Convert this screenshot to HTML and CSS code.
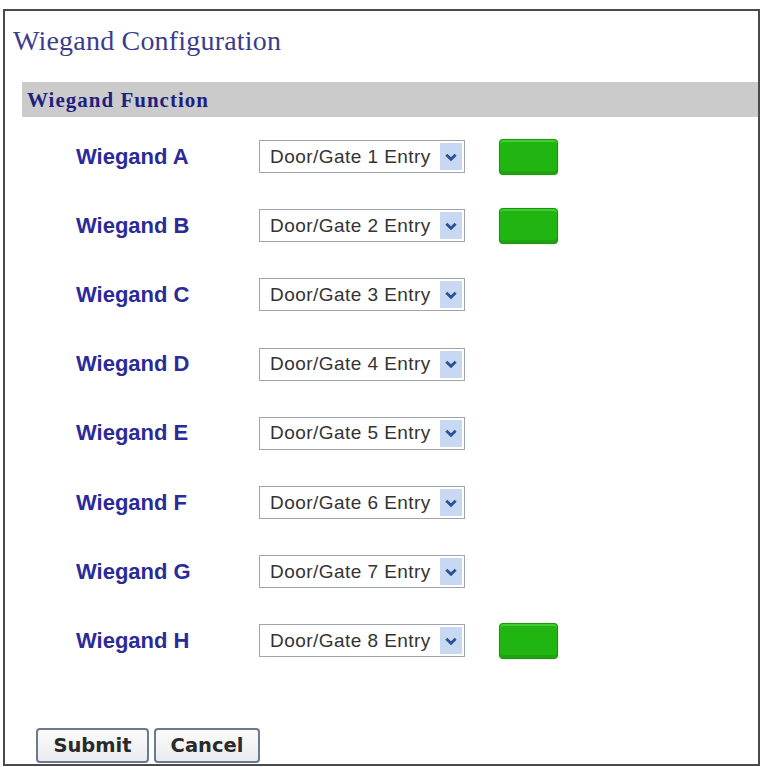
FILE: index.html
```html
<!DOCTYPE html>
<html>
<head>
    <link rel="stylesheet" href="styles.css">
</head>
<body>
    <div class="panel">
        <h1 class="title">Wiegand Configuration</h1>

        <div class="section-bar">Wiegand Function</div>

        <div class="rows">
            <div class="row">
                <span class="row-label">Wiegand A</span>
                <div class="select"><span class="select-text">Door/Gate 1 Entry</span><span class="select-arrow"><svg width="12" height="8" viewBox="0 0 12 8"><path d="M2 2 L6 6 L10 2" fill="none" stroke="#2f4f93" stroke-width="2.4"/></svg></span></div>
                <span class="status-led"></span>
            </div>
            <div class="row">
                <span class="row-label">Wiegand B</span>
                <div class="select"><span class="select-text">Door/Gate 2 Entry</span><span class="select-arrow"><svg width="12" height="8" viewBox="0 0 12 8"><path d="M2 2 L6 6 L10 2" fill="none" stroke="#2f4f93" stroke-width="2.4"/></svg></span></div>
                <span class="status-led"></span>
            </div>
            <div class="row">
                <span class="row-label">Wiegand C</span>
                <div class="select"><span class="select-text">Door/Gate 3 Entry</span><span class="select-arrow"><svg width="12" height="8" viewBox="0 0 12 8"><path d="M2 2 L6 6 L10 2" fill="none" stroke="#2f4f93" stroke-width="2.4"/></svg></span></div>
            </div>
            <div class="row">
                <span class="row-label">Wiegand D</span>
                <div class="select"><span class="select-text">Door/Gate 4 Entry</span><span class="select-arrow"><svg width="12" height="8" viewBox="0 0 12 8"><path d="M2 2 L6 6 L10 2" fill="none" stroke="#2f4f93" stroke-width="2.4"/></svg></span></div>
            </div>
            <div class="row">
                <span class="row-label">Wiegand E</span>
                <div class="select"><span class="select-text">Door/Gate 5 Entry</span><span class="select-arrow"><svg width="12" height="8" viewBox="0 0 12 8"><path d="M2 2 L6 6 L10 2" fill="none" stroke="#2f4f93" stroke-width="2.4"/></svg></span></div>
            </div>
            <div class="row">
                <span class="row-label">Wiegand F</span>
                <div class="select"><span class="select-text">Door/Gate 6 Entry</span><span class="select-arrow"><svg width="12" height="8" viewBox="0 0 12 8"><path d="M2 2 L6 6 L10 2" fill="none" stroke="#2f4f93" stroke-width="2.4"/></svg></span></div>
            </div>
            <div class="row">
                <span class="row-label">Wiegand G</span>
                <div class="select"><span class="select-text">Door/Gate 7 Entry</span><span class="select-arrow"><svg width="12" height="8" viewBox="0 0 12 8"><path d="M2 2 L6 6 L10 2" fill="none" stroke="#2f4f93" stroke-width="2.4"/></svg></span></div>
            </div>
            <div class="row">
                <span class="row-label">Wiegand H</span>
                <div class="select"><span class="select-text">Door/Gate 8 Entry</span><span class="select-arrow"><svg width="12" height="8" viewBox="0 0 12 8"><path d="M2 2 L6 6 L10 2" fill="none" stroke="#2f4f93" stroke-width="2.4"/></svg></span></div>
                <span class="status-led"></span>
            </div>
        </div>

        <div class="actions">
            <button class="btn btn-submit">Submit</button>
            <button class="btn btn-cancel">Cancel</button>
        </div>
    </div>
</body>
</html>
```

FILE: styles.css
```css
body {
    margin: 0;
    background-color: #fff;
    font-family: "Liberation Sans", Arial, sans-serif;
}
.panel {
    margin: 9px 2px 1px 3px;
    height: 753px;
    border: 2px solid #4a4a4a;
    display: flex;
    flex-direction: column;
}
.title {
    margin: 0;
    padding: 16px 0 0 8px;
    height: 42px;
    font-family: "Liberation Serif", "Times New Roman", serif;
    font-size: 28px;
    font-weight: normal;
    line-height: 28px;
    letter-spacing: 0.2px;
    color: #3c3c8c;
}
.section-bar {
    margin: 13px 0 0 17px;
    height: 35px;
    line-height: 36px;
    padding-left: 5px;
    background-color: #cbcbcb;
    font-family: "Liberation Serif", "Times New Roman", serif;
    font-size: 21px;
    font-weight: bold;
    letter-spacing: 1px;
    color: #1f1f7e;
}
.rows {
    margin-top: 5px;
}
.row {
    display: flex;
    align-items: center;
    height: 69.2px;
    padding-left: 71px;
}
.row-label {
    width: 183px;
    font-size: 22px;
    font-weight: bold;
    color: #2b2b98;
}
.select {
    display: flex;
    align-items: center;
    width: 204px;
    height: 31px;
    border: 1px solid #9fa4ad;
    background-color: #fff;
}
.select-text {
    flex: 1;
    padding-left: 10px;
    font-size: 19px;
    letter-spacing: 0.45px;
    color: #333;
}
.select-arrow {
    display: flex;
    align-items: center;
    justify-content: center;
    width: 22px;
    height: 27px;
    margin-right: 2px;
    background-color: #c7d8f2;
}
.select-arrow svg {
    width: 14px;
    height: 10px;
}
.status-led {
    margin-left: 34px;
    width: 57px;
    height: 34px;
    border: 1px solid #1c9410;
    border-radius: 4px;
    background-color: #21b512;
    box-shadow: inset 0 2px 0 #44cc36, inset 0 -3px 0 #1fa311, 0 0 1px #5ad04c;
}
.actions {
    margin-top: auto;
    padding: 0 0 1px 31px;
    display: flex;
    gap: 5px;
}
.btn {
    height: 35px;
    border: 2px solid #6b7a8c;
    border-radius: 4px;
    background: linear-gradient(#fbfbfb, #e9ecef);
    font-family: "DejaVu Sans", Verdana, sans-serif;
    font-size: 19.5px;
    font-weight: bold;
    color: #2a2a2a;
    padding: 0;
}
.btn-submit {
    width: 113px;
}
.btn-cancel {
    width: 106px;
}
```
